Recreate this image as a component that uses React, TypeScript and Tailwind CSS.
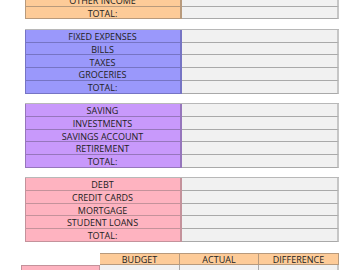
const font = { fontFamily: '"Open Sans", "Liberation Sans", sans-serif' };

type Section = {
  rows: string[];
  bg: string;
  line: string;
};

const sections: Section[] = [
  {
    rows: ["OTHER INCOME", "TOTAL:"],
    bg: "bg-[#fdcb98]",
    line: "border-[#b89a7c]",
  },
  {
    rows: ["FIXED EXPENSES", "BILLS", "TAXES", "GROCERIES", "TOTAL:"],
    bg: "bg-[#9a98fb]",
    line: "border-[#7674c4]",
  },
  {
    rows: ["SAVING", "INVESTMENTS", "SAVINGS ACCOUNT", "RETIREMENT", "TOTAL:"],
    bg: "bg-[#c899fb]",
    line: "border-[#9676bc]",
  },
  {
    rows: ["DEBT", "CREDIT CARDS", "MORTGAGE", "STUDENT LOANS", "TOTAL:"],
    bg: "bg-[#feb3c0]",
    line: "border-[#c4929b]",
  },
];

function Block({ s }: { s: Section }) {
  return (
    <div className="flex flex-col border-t border-[#b8b8b8]">
      {s.rows.map((r) => (
        <div key={r} className="grid h-[12.7px] grid-cols-[157px_157.5px]">
          <div
            className={`${s.bg} ${s.line} flex items-center justify-center border-b border-l border-r-2 pt-[1.5px] text-[9px] leading-none text-[#222]`}
          >
            {r}
          </div>
          <div className="border-b border-r-2 border-b-[#a9a9a9] border-r-[#c6c6c6] bg-[#f1f1f1]" />
        </div>
      ))}
    </div>
  );
}

export default function App() {
  return (
    <div className="h-[270px] w-[360px] overflow-hidden bg-white" style={font}>
      <div className="-mt-[7px] ml-[24.5px] flex w-[314.5px] flex-col gap-[9.7px]">
        {sections.map((s, i) => (
          <Block key={i} s={s} />
        ))}
      </div>

      <div className="ml-[21px] mt-[11px] flex flex-col">
        <div className="grid h-[12.7px] grid-cols-[79px_80px_79px_80px]">
          <div />
          {["BUDGET", "ACTUAL", "DIFFERENCE"].map((h) => (
            <div
              key={h}
              className="flex items-center justify-center border border-l-0 border-[#b89a7c] bg-[#fdcb98] pt-[1.5px] text-[9px] leading-none text-[#222] first:border-l"
            >
              {h}
            </div>
          ))}
        </div>
        <div className="grid h-[12.7px] grid-cols-[79px_80px_79px_80px]">
          <div className="border-x border-t border-[#c4929b] bg-[#feb3c0]" />
          <div className="border-r border-[#a9a9a9] bg-[#f1f1f1]" />
          <div className="border-r border-[#a9a9a9] bg-[#f1f1f1]" />
          <div className="border-r-2 border-[#c6c6c6] bg-[#f1f1f1]" />
        </div>
      </div>
    </div>
  );
}
